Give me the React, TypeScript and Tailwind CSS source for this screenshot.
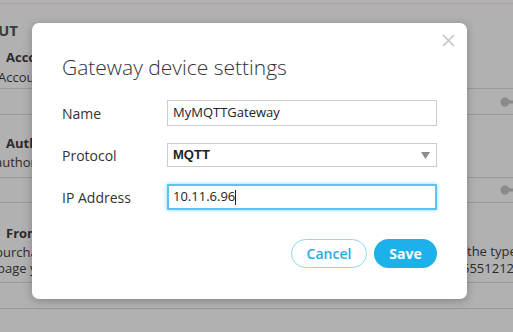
import React from "react";

function Key() {
  return (
    <svg width="16" height="10" viewBox="0 0 16 10" className="shrink-0">
      <circle cx="5" cy="5" r="4.5" fill="#8a8a8a" />
      <rect x="8" y="3.5" width="8" height="3" fill="#8a8a8a" />
    </svg>
  );
}

export default function App() {
  return (
    <div
      className="relative w-[513px] h-[332px] overflow-hidden bg-[#b1b1b1] text-[#2b2b2b]"
      style={{ fontFamily: "'Open Sans', sans-serif" }}
    >
      {/* background page */}
      <div className="flex flex-col">
        <div className="h-[3px]" />
        <div className="h-px bg-[#b49ca2]" />
        <div className="h-[84px] relative">
          <div className="absolute left-[-2px] top-[15px] text-[15px] font-bold text-[#3a3a3a]">UT</div>
          <div className="absolute left-[6px] top-[44px] text-[13px] font-bold">Account</div>
          <div className="absolute left-[-2px] top-[64px] text-[13px]">Account</div>
        </div>
        <div className="h-px bg-[#999999]" />
        <div className="h-[25px] flex items-center justify-end">
          <div className="mr-[-3px]"><Key /></div>
        </div>
        <div className="h-px bg-[#999999]" />
        <div className="h-[62px] relative">
          <div className="absolute left-[6px] top-[19px] text-[13px] font-bold">Authentication</div>
          <div className="absolute left-[-5px] top-[38px] text-[13px]">authorization</div>
        </div>
        <div className="h-px bg-[#999999]" />
        <div className="h-[24px] flex items-center justify-end">
          <div className="mr-[-3px]"><Key /></div>
        </div>
        <div className="h-px bg-[#999999]" />
        <div className="h-[79px] relative">
          <div className="absolute left-[6px] top-[21px] text-[13px] font-bold">Frontend</div>
          <div className="absolute left-[-5px] top-[40px] text-[13px]">purchase</div>
          <div className="absolute left-[-3px] top-[56px] text-[13px]">page your</div>
          <div className="absolute left-[467px] top-[39px] text-[13px] whitespace-nowrap">the type</div>
          <div className="absolute left-[462px] top-[56px] text-[13px] whitespace-nowrap">5551212.</div>
        </div>
        <div className="h-px bg-[#999999]" />
        <div className="h-[25px]" />
        <div className="h-px bg-[#999999]" />
      </div>

      {/* modal */}
      <div className="absolute left-[32px] top-[23px] w-[435px] h-[276px] rounded-[7px] bg-white shadow-[0_2px_10px_rgba(0,0,0,0.25)] text-[#333]">
        <button className="absolute right-[12px] top-[11px] w-[13px] h-[13px]">
          <svg width="13" height="13" viewBox="0 0 13 13">
            <path d="M1 1L12 12M12 1L1 12" stroke="#c4c4c4" strokeWidth="1.6" />
          </svg>
        </button>
        <div className="pl-[30px] pr-[30px] pt-[29px]">
          <div className="text-[21px] font-light leading-[30px] text-[#2f3338]">Gateway device settings</div>
          <div className="mt-[18px] flex flex-col gap-[17px]">
            <div className="flex items-center">
              <div className="w-[105px] shrink-0 text-[14px]">Name</div>
              <div className="w-[270px] h-[26px] border border-[#cccccc] flex items-center px-[5px] text-[13px] text-[#222]">
                MyMQTTGateway
              </div>
            </div>
            <div className="flex items-center">
              <div className="w-[105px] shrink-0 text-[14px]">Protocol</div>
              <div
                className="w-[270px] h-[24px] border border-[#cccccc] flex items-center justify-between px-[5px] text-[13px] font-bold text-[#222]"
                style={{ fontFamily: "'Liberation Sans', Arial, sans-serif" }}
              >
                <span>MQTT</span>
                <svg width="9" height="7" viewBox="0 0 9 7" className="mr-[1px]">
                  <path d="M0 0H9L4.5 7Z" fill="#8c8c8c" />
                </svg>
              </div>
            </div>
            <div className="flex items-center">
              <div className="w-[105px] shrink-0 text-[14px]">IP Address</div>
              <div className="w-[270px] h-[26px] border-2 border-[#5ec3f1] shadow-[0_0_4px_#8fd6f6] flex items-center px-[4px] text-[13px] text-[#222]">
                10.11.6.96<span className="inline-block w-px h-[15px] bg-[#222]" />
              </div>
            </div>
          </div>
          <div className="mt-[29px] flex justify-end gap-[7px]">
            <button className="w-[76px] h-[29px] rounded-full border border-[#93d5f4] text-[#29abe2] text-[14px] font-semibold">
              Cancel
            </button>
            <button className="w-[63px] h-[29px] rounded-full bg-[#1db1ea] text-white text-[14px] font-bold">
              Save
            </button>
          </div>
        </div>
      </div>
    </div>
  );
}
